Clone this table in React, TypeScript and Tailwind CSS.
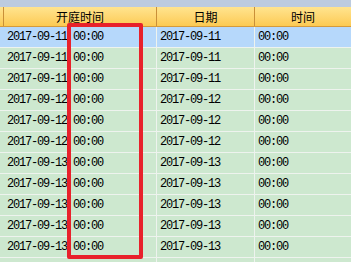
const rows = [
  "2017-09-11",
  "2017-09-11",
  "2017-09-11",
  "2017-09-12",
  "2017-09-12",
  "2017-09-12",
  "2017-09-13",
  "2017-09-13",
  "2017-09-13",
  "2017-09-13",
  "2017-09-13",
];

const mono = "font-['Liberation_Mono',monospace] text-[12px] tracking-[-1.2px] text-black";

export default function App() {
  return (
    <div className="relative w-[351px] h-[262px] overflow-hidden bg-[#cde8cf] font-['Noto_Sans_CJK_SC',sans-serif]">
      {/* top strip */}
      <div className="h-[7px] bg-[#bccbdf]" />

      {/* header */}
      <div className="flex h-[20px] border-b border-[#d49a3c] bg-gradient-to-b from-[#ffe48e] to-[#fcca52] text-[12px] leading-none text-black">
        <div className="w-[4px] shrink-0 border-r border-[#c98f38]" />
        <div className="w-[153px] shrink-0 border-r border-[#c98f38] flex items-center justify-center">开庭时间</div>
        <div className="w-[98px] shrink-0 border-r border-[#c98f38] flex items-center justify-center">日期</div>
        <div className="flex-1 flex items-center justify-center">时间</div>
      </div>

      {/* rows */}
      {rows.map((d, i) => (
        <div
          key={i}
          className={`flex h-[21px] border-b border-[#eef3ee] ${i === 0 ? "bg-[#b6d8fb]" : "bg-[#cde8cf]"}`}
        >
          <div className="w-[4px] shrink-0" />
          <div className={`w-[153px] shrink-0 border-r border-[#eef3ee] flex items-center pl-[3px] ${mono}`}>
            {d} 00:00
          </div>
          <div className={`w-[98px] shrink-0 border-r border-[#eef3ee] flex items-center pl-[3px] ${mono}`}>{d}</div>
          <div className={`flex-1 flex items-center pl-[3px] ${mono}`}>00:00</div>
        </div>
      ))}
      {/* partly visible next row */}
      <div className="flex h-[21px]">
        <div className="w-[157px] shrink-0 border-r border-[#eef3ee]" />
        <div className="w-[98px] shrink-0 border-r border-[#eef3ee]" />
        <div className="flex-1" />
      </div>

      {/* red highlight box */}
      <div className="absolute left-[67px] top-[23px] w-[76px] h-[236px] border-[4px] border-[#e8212b] rounded-[2px]" />
    </div>
  );
}
